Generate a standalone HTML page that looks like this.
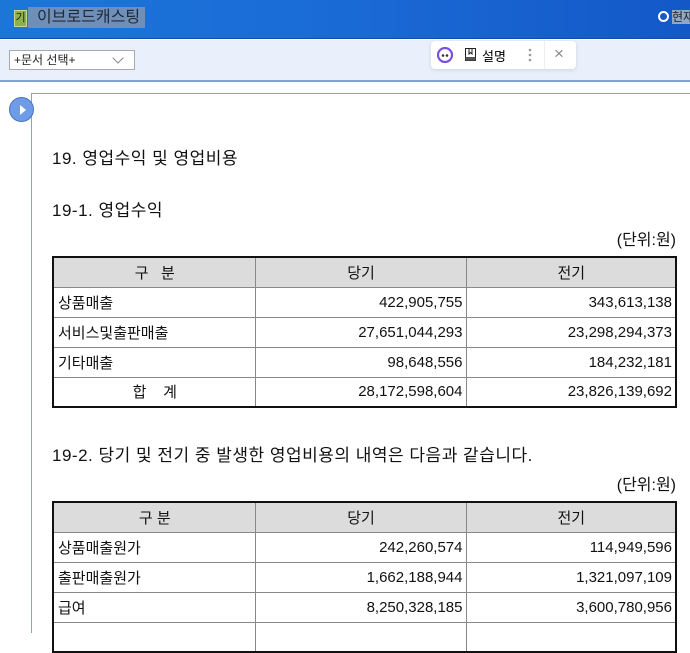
<!DOCTYPE html>
<html><head><meta charset="utf-8"><style>
*{margin:0;padding:0;box-sizing:border-box}
body{width:690px;height:622px;overflow:hidden;background:#fff;font-family:"Liberation Sans","Noto Sans CJK KR",sans-serif;position:relative}
.hdr{position:absolute;left:0;top:0;width:690px;height:39px;background:linear-gradient(90deg,#1c76d8,#1a6ad6 50%,#1458c8);border-bottom:1px solid #0f4da8}
.logo{position:absolute;left:14px;top:10px;width:13px;height:17px;background:#8bb34a;border:1px solid #c5d98c;font-size:11px;line-height:15px;text-align:center;color:#222}
.title{position:absolute;left:28px;top:7px;width:117px;height:21px;background:#6f8fb8;color:#1d2a3a;font-size:16px;line-height:21px;padding-left:9px;white-space:nowrap;overflow:hidden}
.now{position:absolute;left:658px;top:8px;color:#fff;font-size:12px;white-space:nowrap}
.now i{display:inline-block;width:11px;height:11px;border:2px solid #fff;border-radius:50%;margin-right:3px;vertical-align:-1px}
.now span{background:#8fa7c8;color:#222}
.tb{position:absolute;left:0;top:40px;width:690px;height:42px;background:#e9f0fb;border-bottom:2px solid #7fa3d8}
.sel{position:absolute;left:9px;top:10px;width:126px;height:20px;background:#fff;border:1px solid #a9a9a9;font-size:12px;line-height:18px;padding-left:4px;color:#222}
.sel:after{content:"";position:absolute;right:12px;top:3px;width:7px;height:7px;border-right:1px solid #888;border-bottom:1px solid #888;transform:rotate(45deg)}
.pop{position:absolute;left:431px;top:41px;width:145px;height:28px;background:#fff;border-radius:4px;box-shadow:0 1px 4px rgba(0,0,0,.12);font-size:13px}
.doc{position:absolute;left:31px;top:93px;width:670px;height:540px;border-left:1px solid #8aa4c8;border-top:1px solid #8aa4c8;background:#fff}
.play{position:absolute;left:9px;top:97px;width:25px;height:25px;border-radius:50%;background:#6f9ce6;border:1px solid #4a74bf}
.play:after{content:"";position:absolute;left:10px;top:7px;border-left:6px solid #fff;border-top:5px solid transparent;border-bottom:5px solid transparent}
.t{position:absolute;font-size:17px;letter-spacing:0.5px;color:#111;white-space:nowrap}
.u{position:absolute;right:14px;font-size:16px;color:#111}
table{position:absolute;left:52px;width:625px;border-collapse:collapse;font-size:15px;color:#111;border:2px solid #111}
td{border:1px solid #888;height:30px;padding:0 3px 0 4px;white-space:nowrap}
tr.h td{background:#dcdcdc;text-align:center}
td.r{text-align:right}
</style></head><body>
<div class="hdr"><div class="logo">기</div><div class="title">이브로드캐스팅</div><div class="now"><i></i><span>현재</span></div></div>
<div class="tb"><div class="sel">+문서 선택+</div></div>
<div class="pop">
<svg style="position:absolute;left:6px;top:6px" width="16" height="16"><circle cx="8" cy="8" r="7" fill="#fff" stroke="#7b4fe0" stroke-width="2.2"/><circle cx="6" cy="8.5" r="1.3" fill="#333"/><circle cx="10" cy="8.5" r="1.3" fill="#333"/></svg>
<svg style="position:absolute;left:34px;top:7px" width="11" height="13"><rect x="0.5" y="0.5" width="10" height="12" fill="none" stroke="#222"/><rect x="0.5" y="9" width="10" height="3.5" fill="#555"/><path d="M4 1v5l1.5-1.5L7 6V1" fill="none" stroke="#222"/></svg>
<span style="position:absolute;left:51px;top:5px">설명</span>
<svg style="position:absolute;left:97px;top:7px" width="4" height="14"><circle cx="2" cy="2" r="1.3" fill="#999"/><circle cx="2" cy="7" r="1.3" fill="#999"/><circle cx="2" cy="12" r="1.3" fill="#999"/></svg>
<div style="position:absolute;left:113px;top:0;width:1px;height:28px;background:#eee"></div>
<span style="position:absolute;left:123px;top:3px;color:#888;font-size:17px">×</span>
</div>
<div class="doc"></div>
<div class="play"></div>
<div class="t" style="left:52px;top:144px">19. 영업수익 및 영업비용</div>
<div class="t" style="left:52px;top:196px">19-1. 영업수익</div>
<div class="u" style="top:226px">(단위:원)</div>
<table style="top:256px">
<tr class="h"><td style="width:202px">구&nbsp;&nbsp;&nbsp;분</td><td style="width:211px">당기</td><td>전기</td></tr>
<tr><td>상품매출</td><td class="r">422,905,755</td><td class="r">343,613,138</td></tr>
<tr><td>서비스및출판매출</td><td class="r">27,651,044,293</td><td class="r">23,298,294,373</td></tr>
<tr><td>기타매출</td><td class="r">98,648,556</td><td class="r">184,232,181</td></tr>
<tr><td style="text-align:center">합&nbsp;&nbsp;&nbsp;&nbsp;계</td><td class="r">28,172,598,604</td><td class="r">23,826,139,692</td></tr>
</table>
<div class="t" style="left:52px;top:441px">19-2. 당기 및 전기 중 발생한 영업비용의 내역은 다음과 같습니다.</div>
<div class="u" style="top:471px">(단위:원)</div>
<table style="top:501px">
<tr class="h"><td style="width:202px">구&nbsp;분</td><td style="width:211px">당기</td><td>전기</td></tr>
<tr><td>상품매출원가</td><td class="r">242,260,574</td><td class="r">114,949,596</td></tr>
<tr><td>출판매출원가</td><td class="r">1,662,188,944</td><td class="r">1,321,097,109</td></tr>
<tr><td>급여</td><td class="r">8,250,328,185</td><td class="r">3,600,780,956</td></tr>
<tr><td>&nbsp;</td><td></td><td></td></tr>
</table>
</body></html>
